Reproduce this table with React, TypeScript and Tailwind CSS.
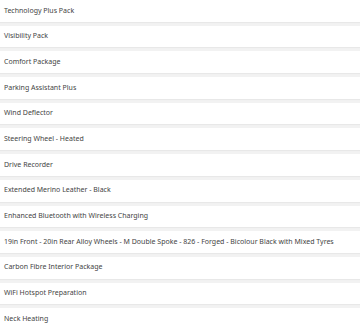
const items = [
  'Technology Plus Pack',
  'Visibility Pack',
  'Comfort Package',
  'Parking Assistant Plus',
  'Wind Deflector',
  'Steering Wheel - Heated',
  'Drive Recorder',
  'Extended Merino Leather - Black',
  'Enhanced Bluetooth with Wireless Charging',
  '19in Front - 20in Rear Alloy Wheels - M Double Spoke - 826 - Forged - Bicolour Black with Mixed Tyres',
  'Carbon Fibre Interior Package',
  'WiFi Hotspot Preparation',
  'Neck Heating',
]

export default function App() {
  return (
    <div className="w-[360px] h-[330px] overflow-hidden bg-[#f2f2f2] font-['Noto_Sans',sans-serif]">
      <div className="flex flex-col gap-[4px]">
        {items.map((item) => (
          <div
            key={item}
            className="h-[21.7px] flex items-center px-[4px] bg-white shadow-[0_1px_1px_rgba(0,0,0,0.04)] text-[7px] text-[#444] whitespace-nowrap"
          >
            {item}
          </div>
        ))}
      </div>
    </div>
  )
}
